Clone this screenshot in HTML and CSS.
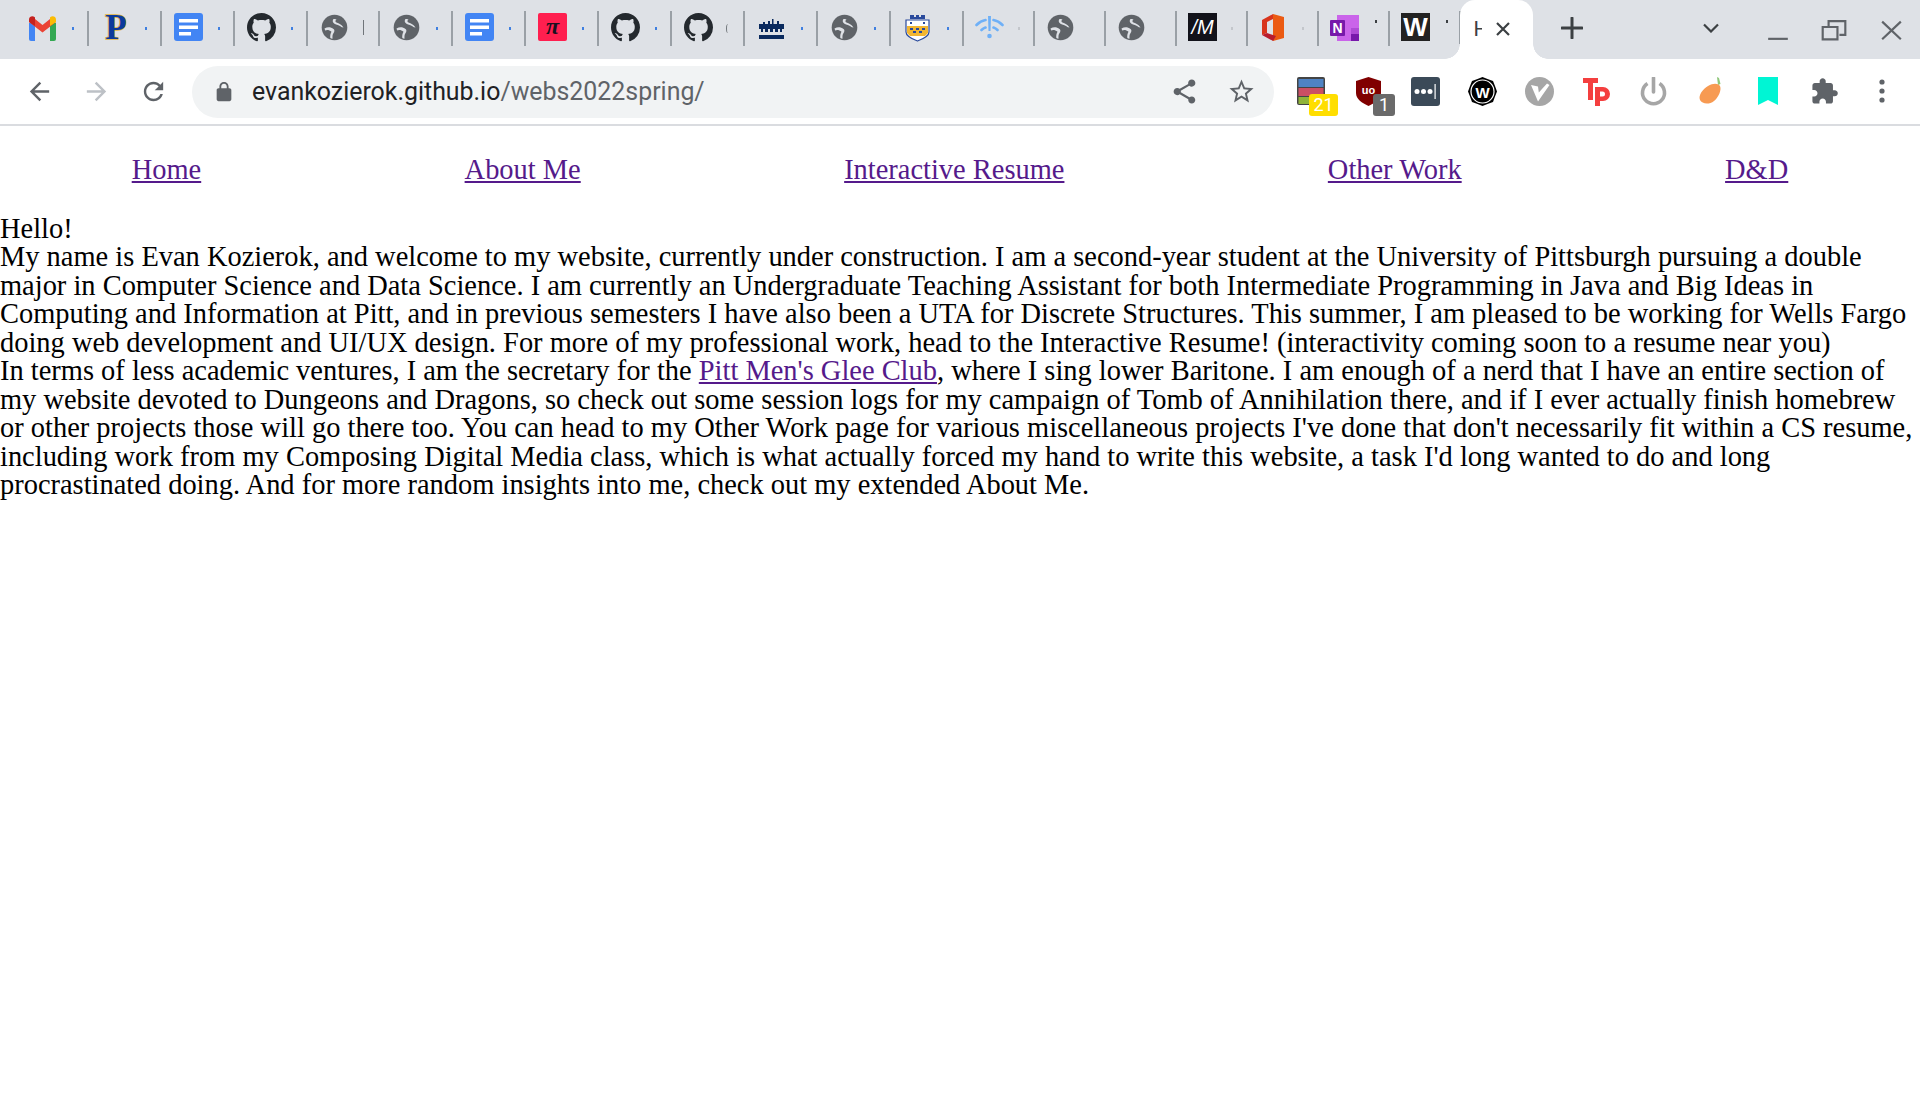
FILE: index.html
```html
<!DOCTYPE html>
<html lang="en">
<head>
<meta charset="utf-8">
<title>Home</title>
<link rel="stylesheet" href="styles.css">
</head>
<body>
<svg class="sprite" aria-hidden="true">
  <symbol id="i-github" viewBox="0 0 16 16"><path fill="#24292e" d="M8 0C3.58 0 0 3.58 0 8c0 3.54 2.29 6.53 5.47 7.59.4.07.55-.17.55-.38 0-.19-.01-.82-.01-1.49-2.01.37-2.53-.49-2.69-.94-.09-.23-.48-.94-.82-1.13-.28-.15-.68-.52-.01-.53.63-.01 1.08.58 1.23.82.72 1.21 1.87.87 2.33.66.07-.52.28-.87.51-1.07-1.78-.2-3.64-.89-3.64-3.95 0-.87.31-1.59.82-2.15-.08-.2-.36-1.02.08-2.12 0 0 .67-.21 2.2.82.64-.18 1.32-.27 2-.27s1.36.09 2 .27c1.53-1.04 2.2-.82 2.2-.82.44 1.1.16 1.92.08 2.12.51.56.82 1.27.82 2.15 0 3.07-1.87 3.75-3.65 3.95.29.25.54.73.54 1.48 0 1.07-.01 1.93-.01 2.2 0 .21.15.46.55.38A8.013 8.013 0 0016 8c0-4.42-3.58-8-8-8z"/></symbol>
  <symbol id="i-globe" viewBox="0 0 29 29"><circle cx="14.500" cy="14.500" r="12.800" fill="#5f6368"/><path fill="#dee1e6" d="M4.500 15.500c3-1.800 6.500-1.500 9 .5 1.800 1.500.5 3.500-.5 5-.7 1.200-.5 3-.5 4.800-1-.2-1.500-.4-2.200-.7-.3-2.500.3-4.800 1.200-6.300-2-1.800-4.500-2.300-6.300-1.300zM13.500 6c1.200 0 1.500.2 3 .2-1.300 1.300-1.500 2.500 0 3.300 2.500 1 5 1.800 7 5-1.500.2-2.500-.8-4-1.700-2-1-5-1.500-6.300-3.300-.8-1.200-.5-2.500.3-3.500z"/></symbol>
  <symbol id="i-docs" viewBox="0 0 29 29"><rect width="29" height="28" rx="3" fill="#4285f4"/><rect x="5" y="6" width="19" height="3.500" fill="#fff"/><rect x="5" y="12.500" width="19" height="3.500" fill="#fff"/><rect x="5" y="19" width="12" height="3.500" fill="#fff"/></symbol>
  <symbol id="i-back" viewBox="0 0 24 24"><path d="M20 11H7.830l5.590-5.590L12 4l-8 8 8 8 1.410-1.410L7.830 13H20v-2z"/></symbol>
</svg>

<header class="browser">
  <div class="tabstrip">
    <div class="tab"><svg class="fav" viewBox="0 0 29 29"><path fill="#4285f4" d="M1 10h6v18H3a2 2 0 0 1-2-2z"/><path fill="#34a853" d="M22 10h6v16a2 2 0 0 1-2 2h-4z"/><path fill="#ea4335" d="M1 9l6-3 7.500 6 7.500-6 6 3-13.500 10.500z"/><path fill="#c5221f" d="M1 6.500c0-3 3.500-4 5.500-2.500l.5.500V13L1 9z"/><path fill="#fbbc04" d="M28 6.500c0-3-3.500-4-5.500-2.500l-.5.500V13l6-4z"/></svg><i class="dot"></i></div>
    <div class="tab"><svg class="fav" viewBox="0 0 29 29"><text class="pitt" x="15" y="26">P</text></svg><i class="dot"></i></div>
    <div class="tab"><svg class="fav"><use href="#i-docs"/></svg><i class="dot"></i></div>
    <div class="tab"><svg class="fav"><use href="#i-github"/></svg><i class="dot"></i></div>
    <div class="tab"><svg class="fav"><use href="#i-globe"/></svg><i class="bar"></i></div>
    <div class="tab"><svg class="fav"><use href="#i-globe"/></svg><i class="dot"></i></div>
    <div class="tab"><svg class="fav"><use href="#i-docs"/></svg><i class="dot"></i></div>
    <div class="tab"><svg class="fav" viewBox="0 0 29 29"><rect width="29" height="28" rx="2" fill="#ff1f4f"/><text class="pi" x="14.500" y="21">π</text></svg><i class="dot"></i></div>
    <div class="tab"><svg class="fav"><use href="#i-github"/></svg><i class="dot"></i></div>
    <div class="tab"><svg class="fav"><use href="#i-github"/></svg><i class="arc"></i></div>
    <div class="tab"><svg class="fav" viewBox="0 0 29 29"><path fill="#0a2a5e" d="M2 11h25v5h-2v3h-2v-3h-2v3h-3v-3h-2v3h-3v-3H11v3H8v-3H6v3H4v-3H2zM6 9h2v2H6zM11 8h2v3h-2zM15 6h1.500v5H15zM20 8h2v3h-2zM2 22h25v4H2z"/></svg><i class="dot"></i></div>
    <div class="tab"><svg class="fav"><use href="#i-globe"/></svg><i class="dot"></i></div>
    <div class="tab"><svg class="fav" viewBox="0 0 29 29"><path fill="#2a4a9c" d="M7 2h4v2h2V2h3v2h2V2h4v4H7z"/><path fill="#fff" stroke="#2a4a9c" stroke-width="1.200" d="M3 7h23v12c0 4-6 7-11.500 9C9 26 3 23 3 19z"/><path fill="#f2b632" d="M4 13h21v7l-3 3H7l-3-3z"/><path fill="#2a4a9c" d="M7 15h3v2H7zM13 15h3v2h-3zM19 15h3v2h-3zM10 18h3v2h-3zM16 18h3v2h-3zM7 9h2v2H7zM20 9h2v2h-2z"/></svg><i class="dot"></i></div>
    <div class="tab tab-narrow"><svg class="fav" viewBox="0 0 29 29"><g fill="none" stroke="#6fb0f7" stroke-width="2.600" stroke-linecap="round"><path d="M1.500 12c3-3 6-4.500 9-5M18.500 7c3 .5 6 2 9 5M6.500 17c1-1 2.500-2 4-2.500M18.500 14.500c1.500.5 3 1.500 4 2.500"/></g><path fill="#6fb0f7" d="M13 3h3l-.5 15h-2z"/><circle cx="14.500" cy="23" r="2.300" fill="#6fb0f7"/></svg><i class="dot dot-faint"></i></div>
    <div class="tab tab-narrow"><svg class="fav"><use href="#i-globe"/></svg></div>
    <div class="tab tab-narrow"><svg class="fav"><use href="#i-globe"/></svg></div>
    <div class="tab tab-narrow"><svg class="fav" viewBox="0 0 29 29"><rect width="29" height="28" fill="#12121a"/><text class="mono-m" x="14.500" y="21">/M</text></svg><i class="dot dot-faint"></i></div>
    <div class="tab tab-narrow"><svg class="fav" viewBox="0 0 29 29"><path fill="#eb5a12" d="M14 1l11 3v21l-11 3z"/><path fill="#d8341c" d="M3 7l11-6v5L8 9v11l-5 2z"/><path fill="#b81c2e" d="M3 22l5-2 9 3-3 5z"/></svg><i class="dot dot-faint"></i></div>
    <div class="tab tab-narrow"><svg class="fav" viewBox="0 0 29 29"><rect x="7" y="2" width="22" height="26" fill="#ca64ea"/><path fill="#7719aa" d="M21 21h8v7h-8z"/><path fill="#ae4bd5" d="M21 15h8v6h-8z"/><rect y="7" width="15" height="16" rx="1" fill="#7719aa"/><text class="onenote" x="7.500" y="20">N</text></svg><i class="tick"></i></div>
    <div class="tab tab-narrow"><svg class="fav" viewBox="0 0 29 29"><rect width="29" height="28" fill="#222"/><text class="wiki" x="14.500" y="23">W</text></svg><i class="tick"></i></div>
    <div class="tab-active"><span class="tab-title">Home</span><svg class="tab-close" viewBox="0 0 14 14"><path d="M1 1l12 12M13 1L1 13"/></svg></div>
    <svg class="new-tab" viewBox="0 0 22 22"><path d="M11 1v20M1 11h20"/></svg>
    <svg class="chevron" viewBox="0 0 16 10"><path d="M1 1.500l7 7 7-7"/></svg>
    <div class="win">
      <svg class="win-btn" viewBox="0 0 57 60"><path d="M19 39.500h20"/></svg>
      <svg class="win-btn" viewBox="0 0 57 60"><path d="M24 27v-5.500h17v14h-6M18 27.500h15V40H18z" transform="translate(-1.500 0)"/></svg>
      <svg class="win-btn" viewBox="0 0 57 60"><path d="M19 22l19 18M38 22L19 40"/></svg>
    </div>
  </div>

  <div class="toolbar">
    <button class="tb"><svg class="ic"><use href="#i-back"/></svg></button>
    <button class="tb tb-off"><svg class="ic flip"><use href="#i-back"/></svg></button>
    <button class="tb"><svg class="ic" viewBox="0 0 24 24"><path d="M17.650 6.350C16.200 4.900 14.210 4 12 4c-4.420 0-7.990 3.580-7.990 8s3.570 8 7.990 8c3.730 0 6.840-2.550 7.730-6h-2.080c-.82 2.330-3.040 4-5.650 4-3.310 0-6-2.690-6-6s2.690-6 6-6c1.660 0 3.140.69 4.220 1.780L13 11h7V4l-2.350 2.350z"/></svg></button>
    <div class="omni">
      <svg class="lock" viewBox="0 0 24 24"><path d="M18 8h-1V6c0-2.760-2.240-5-5-5S7 3.240 7 6v2H6c-1.100 0-2 .9-2 2v10c0 1.100.9 2 2 2h12c1.100 0 2-.9 2-2V10c0-1.100-.9-2-2-2zM9 6c0-1.660 1.340-3 3-3s3 1.340 3 3v2H9V6z"/></svg>
      <div class="url"><span class="host">evankozierok.github.io</span>/webs2022spring/</div>
      <button class="tb tb-omni"><svg class="ic" viewBox="0 0 24 24"><path d="M18 16.080c-.76 0-1.440.3-1.960.77L8.910 12.700c.05-.23.09-.46.09-.7s-.04-.47-.09-.7l7.050-4.110c.54.5 1.250.81 2.040.81 1.660 0 3-1.340 3-3s-1.340-3-3-3-3 1.340-3 3c0 .24.04.47.09.7L8.040 9.810C7.500 9.310 6.790 9 6 9c-1.660 0-3 1.340-3 3s1.340 3 3 3c.79 0 1.500-.31 2.040-.81l7.120 4.160c-.05.21-.08.43-.08.65 0 1.610 1.310 2.920 2.920 2.920s2.920-1.310 2.920-2.920-1.310-2.920-2.920-2.920z"/></svg></button>
      <button class="tb tb-omni"><svg class="ic" viewBox="0 0 24 24"><path d="M22 9.240l-7.190-.62L12 2 9.190 8.630 2 9.240l5.460 4.730L5.820 21 12 17.270 18.180 21l-1.630-7.030L22 9.240zM12 15.400l-3.760 2.270 1-4.280-3.320-2.880 4.380-.38L12 6.100l1.710 4.040 4.380.38-3.320 2.880 1 4.280L12 15.400z"/></svg></button>
    </div>
    <div class="exts">
      <div class="ext"><svg class="ext-ic" viewBox="0 0 29 29"><rect width="28" height="28" rx="2" fill="#444"/><rect x="1.500" y="2" width="25" height="8" fill="#4f83c4"/><rect x="1.500" y="11" width="25" height="8" fill="#cb4f64"/><rect x="1.500" y="20" width="25" height="7" fill="#8fb33a"/></svg><span class="badge badge-yellow">21</span></div>
      <div class="ext"><svg class="ext-ic" viewBox="0 0 29 29"><path fill="#800000" d="M14.500 0L27 4v12c0 6-6 10-12.500 13C8 26 2 22 2 16V4z"/><text class="uo" x="14.500" y="17">uo</text></svg><span class="badge badge-grey">1</span></div>
      <div class="ext"><svg class="ext-ic" viewBox="0 0 29 29"><rect width="29" height="29" rx="3" fill="#3b4a58"/><circle cx="6" cy="14.500" r="2.500" fill="#fff"/><circle cx="12.500" cy="14.500" r="2.500" fill="#fff"/><circle cx="19" cy="14.500" r="2.500" fill="#fff"/><rect x="23.500" y="7" width="1.200" height="15" fill="#fff"/></svg></div>
      <div class="ext"><svg class="ext-ic" viewBox="0 0 29 29"><path d="M14.500 0l5 2 5.500 2 2 5 2 5.500-2 5-2 5.500-5.500 2-5 2-5-2-5.500-2-2-5.500-2-5 2-5.500 2-5 5.500-2z"/><circle cx="14.500" cy="14.500" r="11.500" fill="none" stroke="#fff" stroke-width="1.200"/><text class="wind" x="14.500" y="20.500">W</text></svg></div>
      <div class="ext"><svg class="ext-ic" viewBox="0 0 29 29"><circle cx="14.500" cy="14.500" r="14.500" fill="#a6a6a6"/><path fill="#fff" d="M6 8l7 1.500.8 6L22 6.500l2.500 1.500L13 24.500z"/></svg></div>
      <div class="ext"><svg class="ext-ic" viewBox="0 0 29 29"><path fill="#f43f3f" d="M1 1h15v5h-5v17H6V6H1z"/><path fill="#f43f3f" fill-rule="evenodd" d="M13 10h8a7 7 0 0 1 0 14h-3v5h-5zm5 4.500v5h2.500a2.500 2.500 0 0 0 0-5z"/></svg></div>
      <div class="ext"><svg class="ext-ic" viewBox="0 0 29 29"><g fill="none" stroke="#a6a6a6" stroke-width="3.600"><path d="M8.500 6.500a11 11 0 1 0 12 0"/><path d="M14.500 1v14" stroke-linecap="round"/></g></svg></div>
      <div class="ext"><svg class="ext-ic" viewBox="0 0 29 29"><path fill="#8fc77a" d="M21 0l2 1 1.500 6-2.500 1z"/><path fill="#f79a52" d="M12 9c5-3 10-3 12 0 2 4-2 12-6 15-5 4-12 3-14-1-2-5 3-11 8-14z"/></svg></div>
      <div class="ext"><svg class="bookmark" viewBox="0 0 20 28"><path fill="#00f5d4" d="M0 0h20v28l-10-5-10 5z"/></svg></div>
      <div class="ext"><svg class="ext-ic ext-dark" viewBox="0 0 24 24"><path d="M20.500 11H19V7c0-1.100-.9-2-2-2h-4V3.500C13 2.120 11.880 1 10.500 1S8 2.120 8 3.500V5H4c-1.100 0-1.990.9-1.990 2v3.800H3.500c1.490 0 2.700 1.210 2.700 2.700s-1.210 2.700-2.700 2.700H2V20c0 1.100.9 2 2 2h3.800v-1.500c0-1.490 1.210-2.700 2.700-2.700 1.490 0 2.700 1.210 2.700 2.700V22H17c1.100 0 2-.9 2-2v-4h1.500c1.380 0 2.500-1.120 2.500-2.500S21.880 11 20.500 11z"/></svg></div>
      <div class="ext"><svg class="menu" viewBox="0 0 6 24"><circle cx="3" cy="3" r="2.600"/><circle cx="3" cy="12" r="2.600"/><circle cx="3" cy="21" r="2.600"/></svg></div>
    </div>
  </div>
</header>

<nav class="site-nav">
  <a href="#home">Home</a>
  <a href="#about">About Me</a>
  <a href="#resume">Interactive Resume</a>
  <a href="#work">Other Work</a>
  <a href="#dnd">D&amp;D</a>
</nav>

<main class="content">
  <div>Hello!</div>
  <div>My name is Evan Kozierok, and welcome to my website, currently under construction. I am a second-year student at the University of Pittsburgh pursuing a double major in Computer Science and Data Science. I am currently an Undergraduate Teaching Assistant for both Intermediate Programming in Java and Big Ideas in Computing and Information at Pitt, and in previous semesters I have also been a UTA for Discrete Structures. This summer, I am pleased to be working for Wells Fargo doing web development and UI/UX design. For more of my professional work, head to the Interactive Resume! (interactivity coming soon to a resume near you)</div>
  <div>In terms of less academic ventures, I am the secretary for the <a href="#glee">Pitt Men's Glee Club</a>, where I sing lower Baritone. I am enough of a nerd that I have an entire section of my website devoted to Dungeons and Dragons, so check out some session logs for my campaign of Tomb of Annihilation there, and if I ever actually finish homebrew or other projects those will go there too. You can head to my Other Work page for various miscellaneous projects I've done that don't necessarily fit within a CS resume, including work from my Composing Digital Media class, which is what actually forced my hand to write this website, a task I'd long wanted to do and long procrastinated doing. And for more random insights into me, check out my extended About Me.</div>
</main>
</body>
</html>
```

FILE: styles.css
```css
* { box-sizing: border-box; }

html, body {
  margin: 0;
  padding: 0;
  background: #fff;
}

body {
  font-family: "Liberation Serif", "Times New Roman", serif;
  font-size: 28.44px;
  line-height: 28.44px;
  color: #000;
  height: 1115px;
  overflow: hidden;
}

a { color: #551a8b; }

.sprite { display: none; }

/* Browser chrome */
.browser { font-family: Roboto, "Liberation Sans", sans-serif; }

.tabstrip {
  display: flex;
  align-items: flex-start;
  height: 59px;
  padding-left: 16px;
  background: #dee1e6;
}

.tab {
  flex: none;
  display: flex;
  align-items: center;
  width: 72.9px;
  height: 35px;
  margin-top: 11px;
  padding-left: 12px;
  border-right: 2px solid #9aa0a6;
  position: relative;
}

.tab-narrow { width: 71px; padding-left: 11px; }

.fav {
  flex: none;
  width: 29px;
  height: 29px;
  margin-top: -2px;
}

.dot {
  position: absolute;
  right: 13px;
  top: 16px;
  width: 2px;
  height: 3px;
  background: #3f7fe0;
}

.dot-faint { background: #c3c6cb; }

.bar {
  position: absolute;
  right: 14px;
  top: 9px;
  width: 1.500px;
  height: 15px;
  background: #70757a;
}

.arc {
  position: absolute;
  right: 13px;
  top: 13px;
  width: 4px;
  height: 9px;
  border-left: 1.500px solid #70757a;
  border-radius: 50%;
}

.tick {
  position: absolute;
  right: 11px;
  top: 9px;
  width: 1.500px;
  height: 3px;
  background: #3c4043;
}

.tab-active {
  flex: none;
  position: relative;
  display: flex;
  align-items: center;
  width: 73px;
  height: 59px;
  padding: 0 0 2px 14px;
  margin-left: -1px;
  background: #fff;
  border-radius: 15px 15px 0 0;
}

.tab-active::before,
.tab-active::after {
  content: "";
  position: absolute;
  bottom: 0;
  width: 15px;
  height: 15px;
}

.tab-active::before {
  left: -15px;
  background: radial-gradient(circle at 0 0, #dee1e6 14.5px, #fff 15px);
}

.tab-active::after {
  right: -15px;
  background: radial-gradient(circle at 100% 0, #dee1e6 14.5px, #fff 15px);
}

.tab-title {
  width: 8px;
  overflow: hidden;
  font-size: 21px;
  line-height: 24px;
  color: #3c4043;
}

.tab-close {
  width: 14px;
  height: 14px;
  margin-left: 14px;
  fill: none;
  stroke: #3c4043;
  stroke-width: 2.200;
}

.new-tab {
  flex: none;
  width: 22px;
  height: 22px;
  margin: 17px 0 0 28px;
  fill: none;
  stroke: #3c4043;
  stroke-width: 3;
  stroke-linecap: round;
}

.chevron {
  flex: none;
  width: 16px;
  height: 10px;
  margin: 23px 0 0 120px;
  fill: none;
  stroke: #3c4043;
  stroke-width: 2.200;
}

.win {
  display: flex;
  margin-left: auto;
}

.win-btn {
  width: 57px;
  height: 59px;
  fill: none;
  stroke: #5f6368;
  stroke-width: 2.200;
}

.toolbar {
  display: flex;
  align-items: center;
  height: 67px;
  padding: 1px 0 0 11px;
  background: #fff;
  border-bottom: 2px solid #dadce0;
}

.tb {
  flex: none;
  display: flex;
  align-items: center;
  justify-content: center;
  width: 57px;
  height: 52px;
  margin-bottom: 2px;
  padding: 0;
  border: 0;
  background: none;
  fill: #5f6368;
}

.tb-off { fill: #bdc1c6; }

.ic {
  width: 29px;
  height: 29px;
}

.flip { transform: scaleX(-1); }

.omni {
  flex: none;
  display: flex;
  align-items: center;
  width: 1082px;
  height: 52px;
  margin-left: 10px;
  padding: 0 4px 0 21px;
  border-radius: 26px;
  background: #f1f3f4;
}

.lock {
  flex: none;
  width: 22px;
  height: 22px;
  fill: #5f6368;
}

.url {
  flex: 1;
  margin-left: 17px;
  font-size: 24.9px;
  line-height: 30px;
  color: #5f6368;
  white-space: nowrap;
}

.host { color: #202124; }

.tb-omni { width: 57px; }

.exts {
  display: flex;
  margin-left: 9px;
}

.ext {
  position: relative;
  flex: none;
  display: flex;
  align-items: center;
  justify-content: center;
  width: 57px;
  height: 52px;
  margin-bottom: 2px;
}

.ext-ic {
  width: 29px;
  height: 29px;
}

.ext-dark { fill: #5f6368; }

.bookmark {
  width: 20px;
  height: 28px;
}

.menu {
  width: 6px;
  height: 24px;
  fill: #5f6368;
}

.badge {
  position: absolute;
  top: 29px;
  height: 22px;
  border-radius: 3px;
  font-size: 18px;
  line-height: 22px;
  text-align: center;
  color: #fff;
}

.badge-yellow {
  left: 26px;
  width: 29px;
  background: #ffde00;
}

.badge-grey {
  left: 33px;
  width: 22px;
  background: #6a6a6a;
}

/* SVG logo letters */
.pitt {
  font: 700 35px "Liberation Serif", serif;
  text-anchor: middle;
  fill: #0b3a9c;
  stroke: #e2b33c;
  stroke-width: 1.400;
  paint-order: stroke;
}

.pi {
  font: italic 700 24px "Liberation Serif", serif;
  text-anchor: middle;
  fill: #1a1020;
}

.mono-m {
  font: italic 400 20px "Liberation Sans", sans-serif;
  text-anchor: middle;
  fill: #fff;
}

.onenote {
  font: 700 14px "Liberation Sans", sans-serif;
  text-anchor: middle;
  fill: #fff;
}

.wiki {
  font: 700 26px "Liberation Sans", sans-serif;
  text-anchor: middle;
  fill: #fff;
}

.uo {
  font: 700 11px "Liberation Sans", sans-serif;
  text-anchor: middle;
  fill: #fff;
}

.wind {
  font: 700 15px "Liberation Sans", sans-serif;
  text-anchor: middle;
  fill: #fff;
}

/* Page */
.site-nav {
  display: flex;
  justify-content: space-around;
  padding: 30px 0 0;
  height: 89px;
}

.content { width: 1920px; }
```
